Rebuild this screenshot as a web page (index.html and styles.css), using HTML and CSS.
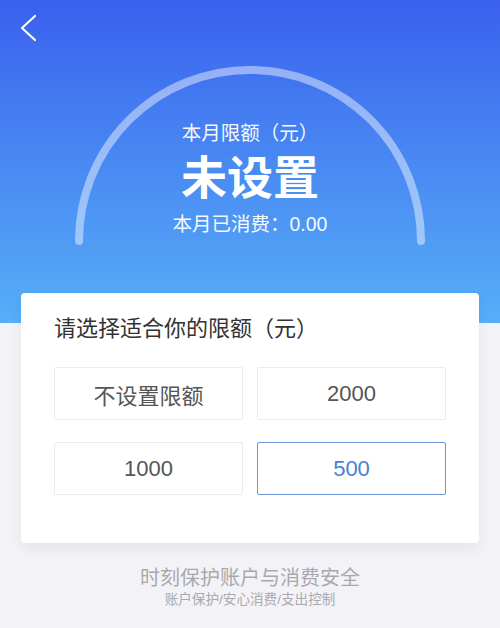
FILE: index.html
```html
<!DOCTYPE html>
<html lang="zh">
<head>
<meta charset="utf-8">
<link rel="stylesheet" href="styles.css">
</head>
<body>
<div class="page">
  <header class="hero">
    <svg class="back" width="22" height="30" viewBox="0 0 22 30"><path d="M17 3 L4 15 L17 27" fill="none" stroke="#fff" stroke-width="2.2" stroke-linecap="round" stroke-linejoin="round"/></svg>
    <svg class="arc" width="500" height="323" viewBox="0 0 500 323"><path d="M79 241 A171 171 0 1 1 421 241" fill="none" stroke="rgba(255,255,255,0.45)" stroke-width="8" stroke-linecap="round"/></svg>
    <div class="hero-text">
      <div class="hero-label">本月限额（元）</div>
      <div class="hero-value">未设置</div>
      <div class="hero-spent">本月已消费：0.00</div>
    </div>
  </header>
  <section class="card">
    <h2 class="card-title">请选择适合你的限额（元）</h2>
    <div class="options">
      <div class="opt">不设置限额</div>
      <div class="opt">2000</div>
      <div class="opt">1000</div>
      <div class="opt selected">500</div>
    </div>
  </section>
  <footer class="foot">
    <div class="foot-main">时刻保护账户与消费安全</div>
    <div class="foot-sub">账户保护/安心消费/支出控制</div>
  </footer>
</div>
</body>
</html>
```
FILE: styles.css
```css
* { box-sizing: border-box; }
html, body { margin: 0; padding: 0; }
body {
  width: 500px;
  height: 628px;
  overflow: hidden;
  background: #f3f3f7;
  font-family: "Liberation Sans", "Noto Sans CJK SC", sans-serif;
}
.page { display: flex; flex-direction: column; }
.hero {
  position: relative;
  height: 323px;
  background: linear-gradient(180deg, #3a60ee 0%, #4785f2 45%, #57aef7 100%);
  display: flex;
  flex-direction: column;
  align-items: center;
}
.back { position: absolute; left: 18px; top: 13px; }
.arc { position: absolute; left: 0; top: 0; }
.hero-text {
  position: relative;
  margin-top: 119px;
  display: flex;
  flex-direction: column;
  align-items: center;
  color: #fff;
}
.hero-label { font-size: 19.5px; line-height: 29px; opacity: 0.95; }
.hero-value { font-size: 46px; font-weight: 700; line-height: 56px; margin-top: 2px; }
.hero-spent { font-size: 19.5px; line-height: 26px; opacity: 0.95; margin-top: 5px; }
.card {
  margin: -30px 21px 0;
  background: #fff;
  border-radius: 4px;
  box-shadow: 0 6px 14px rgba(0, 0, 0, 0.06);
  padding: 20px 33px 48px;
  position: relative;
}
.card-title {
  margin: 0;
  font-size: 22px;
  font-weight: 400;
  color: #333;
  line-height: 32px;
}
.options {
  margin-top: 22px;
  display: grid;
  grid-template-columns: 1fr 1fr;
  column-gap: 14px;
  row-gap: 22px;
}
.opt {
  height: 53px;
  border: 1px solid #ececec;
  border-radius: 2px;
  display: flex;
  align-items: center;
  justify-content: center;
  font-size: 22px;
  color: #555;
}
.opt.selected {
  border-color: #6b93d8;
  color: #4a80d6;
}
.foot {
  margin-top: 22px;
  display: flex;
  flex-direction: column;
  align-items: center;
  color: #a9a9ad;
}
.foot-main { font-size: 20px; line-height: 26px; }
.foot-sub { font-size: 13.6px; line-height: 18px; }
```
